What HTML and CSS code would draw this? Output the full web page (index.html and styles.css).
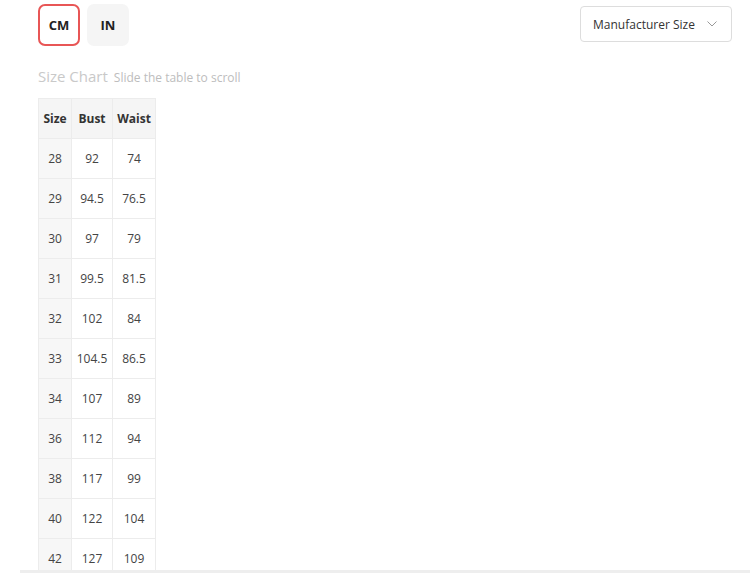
FILE: index.html
```html
<!DOCTYPE html>
<html>
<head>
<meta charset="utf-8">
<link rel="stylesheet" href="styles.css">
</head>
<body>
<div class="page">
  <div class="toolbar">
    <div class="units">
      <button class="unit active">CM</button>
      <button class="unit">IN</button>
    </div>
    <div class="select">
      <span>Manufacturer Size</span>
      <svg class="chev" width="10" height="6" viewBox="0 0 10 6"><path d="M0.5 0.5 L5 5 L9.5 0.5" fill="none" stroke="#999" stroke-width="1"/></svg>
    </div>
  </div>
  <div class="title"><span class="main">Size Chart</span><span class="sub">Slide the table to scroll</span></div>
  <table class="chart">
    <thead>
      <tr><th class="c1">Size</th><th class="c2">Bust</th><th class="c3">Waist</th></tr>
    </thead>
    <tbody>
      <tr><td>28</td><td>92</td><td>74</td></tr>
      <tr><td>29</td><td>94.5</td><td>76.5</td></tr>
      <tr><td>30</td><td>97</td><td>79</td></tr>
      <tr><td>31</td><td>99.5</td><td>81.5</td></tr>
      <tr><td>32</td><td>102</td><td>84</td></tr>
      <tr><td>33</td><td>104.5</td><td>86.5</td></tr>
      <tr><td>34</td><td>107</td><td>89</td></tr>
      <tr><td>36</td><td>112</td><td>94</td></tr>
      <tr><td>38</td><td>117</td><td>99</td></tr>
      <tr><td>40</td><td>122</td><td>104</td></tr>
      <tr><td>42</td><td>127</td><td>109</td></tr>
    </tbody>
  </table>
</div>
<div class="scrollbar"></div>
</body>
</html>
```
FILE: styles.css
```css
html, body { margin: 0; padding: 0; background: #fff; }
body { font-family: "Open Sans", "Liberation Sans", sans-serif; color: #333; }
.page { padding: 4px 18px 0 38px; }
.toolbar { display: flex; justify-content: space-between; align-items: flex-start; }
.units { display: flex; gap: 7px; }
.unit {
  width: 42px; height: 42px; border-radius: 7px; border: 2px solid transparent;
  background: #f5f5f5; font-family: "Open Sans", sans-serif; font-weight: 700;
  font-size: 13px; color: #222; padding: 0; cursor: pointer;
}
.unit.active { background: #fff; border-color: #e85656; }
.select {
  margin-top: 2px; width: 152px; height: 36px; box-sizing: border-box;
  border: 1px solid #ddd; border-radius: 4px; display: flex; align-items: center;
  justify-content: space-between; padding: 0 14px 0 12px; font-size: 12px; color: #333;
}
.chev { display: block; }
.title { margin-top: 20px; height: 24px; display: flex; align-items: baseline; }
.title .main { font-size: 15px; color: #c9c9c9; }
.title .sub { font-size: 12px; color: #bdbdbd; margin-left: 6px; }
.chart { border-collapse: collapse; margin-top: 8px; font-size: 12px; table-layout: fixed; }
.chart th, .chart td {
  border: 1px solid #ececec; height: 39px; padding: 0; text-align: center;
  color: #444;
}
.chart .c1 { width: 32px; }
.chart .c2 { width: 40px; }
.chart .c3 { width: 42px; }
.chart th { background: #f5f5f5; font-weight: 700; color: #333; }
.chart td:first-child { background: #f7f7f7; }
.scrollbar { position: fixed; left: 20px; right: 0; bottom: 0; height: 3px; background: #eee; }
```
